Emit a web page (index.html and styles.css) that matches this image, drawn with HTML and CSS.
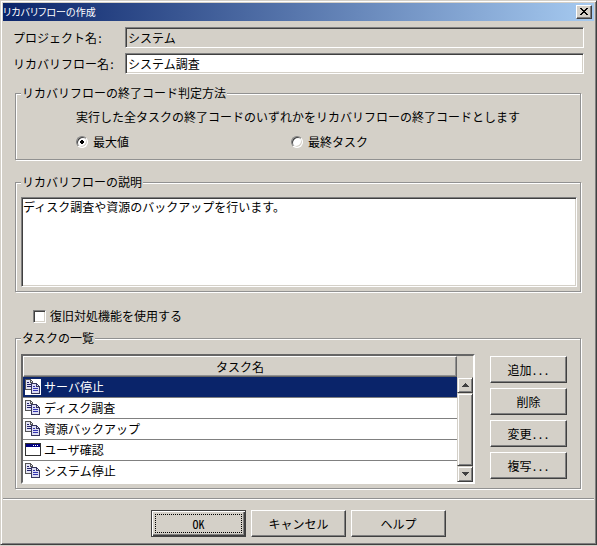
FILE: index.html
```html
<!DOCTYPE html>
<html lang="ja">
<head>
    <meta charset="UTF-8">
    <meta name="viewport" content="width=device-width, initial-scale=1.0">
    <title>リカバリフローの作成</title>
    <link rel="stylesheet" href="styles.css">
</head>
<body>
    <!-- icon definitions used in the task list -->
    <svg class="icon-defs" width="0" height="0" aria-hidden="true">
        <symbol id="icon-job" viewBox="0 0 16 16">
            <rect width="16" height="16" fill="#fff"/>
            <path d="M1 1h5v1h1v1h1v8H1z" fill="#e4e4f4"/>
            <path d="M0 0h6v1H1v9h5v1H0zM5 1h1v2h2v1H5zM6 1h1v1H6zM7 2h1v1H7z" fill="#555"/>
            <path d="M2 3h2v1H2zM2 5h4v1H2zM2 7h4v1H2z" fill="#22226a"/>
            <path d="M7 5h5v1h1v1h1v1h1v7H7z" fill="#dcdcf4"/>
            <path d="M6 4h6v1H7v9h7v1H6zM11 5h1v2h2v1h-3zM12 5h1v1h-1zM13 6h1v1h-1zM14 7h1v8h-1z" fill="#36365e"/>
            <path d="M8 7h2v1H8zM8 9h5v1H8zM8 11h5v1H8z" fill="#3434b0"/>
        </symbol>
        <symbol id="icon-window" viewBox="0 0 16 16">
            <rect x="0" y="1" width="16" height="13" fill="#303030"/>
            <rect x="1" y="2" width="14" height="11" fill="#fff"/>
            <rect x="1" y="2" width="14" height="3" fill="#000080"/>
            <path d="M8 3h1v1H8zM10 3h1v1h-1zM12 3h1v1h-1z" fill="#fff"/>
        </symbol>
    </svg>

    <form class="dialog">
        <div class="title-bar">
            <span class="title">リカバリフローの作成</span>
            <button type="button" class="close-btn" aria-label="閉じる">
                <svg width="8" height="7" viewBox="0 0 8 7"><path d="M0 0h2v1h1v1h2V1h1V0h2v1H7v1H6v1H5v1h1v1h1v1h1v1H6V6H5V5H3v1H2v1H0V6h1V5h1V4h1V3H2V2H1V1H0z"/></svg>
            </button>
        </div>

        <div class="content">
            <div class="fields">
                <label for="project">プロジェクト名<span class="half">:</span></label>
                <input type="text" id="project" class="text-box" value="システム" readonly>
                <label for="flow">リカバリフロー名<span class="half">:</span></label>
                <input type="text" id="flow" class="text-box" value="システム調査">
            </div>

            <fieldset class="group exit-code">
                <legend>リカバリフローの終了コード判定方法</legend>
                <p>実行した全タスクの終了コードのいずれかをリカバリフローの終了コードとします</p>
                <div class="radios">
                    <label class="check"><input type="radio" name="exit" checked>最大値</label>
                    <label class="check"><input type="radio" name="exit">最終タスク</label>
                </div>
            </fieldset>

            <fieldset class="group description">
                <legend>リカバリフローの説明</legend>
                <textarea aria-label="リカバリフローの説明">ディスク調査や資源のバックアップを行います。</textarea>
            </fieldset>

            <label class="check use-recovery"><input type="checkbox">復旧対処機能を使用する</label>

            <fieldset class="group tasks">
                <legend>タスクの一覧</legend>
                <div class="tasks-body">
                    <div class="task-list">
                        <table>
                            <thead>
                                <tr><th>タスク名</th></tr>
                            </thead>
                            <tbody>
                                <tr class="selected"><td><div class="task"><svg class="icon"><use href="#icon-job"/></svg>サーバ停止</div></td></tr>
                                <tr><td><div class="task"><svg class="icon"><use href="#icon-job"/></svg>ディスク調査</div></td></tr>
                                <tr><td><div class="task"><svg class="icon"><use href="#icon-job"/></svg>資源バックアップ</div></td></tr>
                                <tr><td><div class="task"><svg class="icon"><use href="#icon-window"/></svg>ユーザ確認</div></td></tr>
                                <tr><td><div class="task"><svg class="icon"><use href="#icon-job"/></svg>システム停止</div></td></tr>
                            </tbody>
                        </table>
                        <div class="scrollbar">
                            <button type="button" aria-label="上へ"><svg width="7" height="4" viewBox="0 0 7 4"><path d="M3 0h1v1h1v1h1v1h1v1H0V3h1V2h1V1h1z"/></svg></button>
                            <div class="thumb"></div>
                            <button type="button" aria-label="下へ"><svg width="7" height="4" viewBox="0 0 7 4"><path d="M0 0h7v1H6v1H5v1H4v1H3V3H2V2H1V1H0z"/></svg></button>
                        </div>
                    </div>
                    <div class="side-buttons">
                        <button type="button" class="btn">追加<span class="half">...</span></button>
                        <button type="button" class="btn">削除</button>
                        <button type="button" class="btn">変更<span class="half">...</span></button>
                        <button type="button" class="btn">複写<span class="half">...</span></button>
                    </div>
                </div>
            </fieldset>
        </div>

        <div class="footer">
            <button type="button" class="btn default"><span class="focus half">OK</span></button>
            <button type="button" class="btn">キャンセル</button>
            <button type="button" class="btn">ヘルプ</button>
        </div>
    </form>
</body>
</html>
```
FILE: styles.css
```css
* {
    box-sizing: border-box;
}

body {
    margin: 0;
    background-color: #d4d0c8;
    color: #000;
    font-family: "Noto Sans CJK JP", sans-serif;
    font-size: 12px;
    line-height: 16px;
}

button,
input,
textarea {
    margin: 0;
    font: inherit;
    color: inherit;
    border-radius: 0;
}

svg {
    display: block;
    shape-rendering: crispEdges;
}

.icon-defs {
    position: absolute;
}

/* half-width latin glyphs */
.half {
    font-feature-settings: "hwid";
}

.dialog {
    padding: 2px;
    border: 1px solid;
    border-color: #d4d0c8 #404040 #404040 #d4d0c8;
    box-shadow: inset 1px 1px 0 #fff, inset -1px -1px 0 #808080;
    background-color: #d4d0c8;
}

/* title bar */
.title-bar {
    display: flex;
    align-items: center;
    justify-content: space-between;
    height: 18px;
    padding-right: 2px;
    background: linear-gradient(to right, #0a246a, #a6caf0);
    color: #fff;
}

.title {
    font-size: 10px;
    font-feature-settings: "palt";
}

.close-btn {
    display: flex;
    align-items: center;
    justify-content: center;
    width: 16px;
    height: 14px;
    padding: 0 1px 1px 0;
    border: 1px solid;
    border-color: #fff #404040 #404040 #fff;
    box-shadow: inset -1px -1px 0 #808080;
    background-color: #d4d0c8;
}

.content {
    padding: 6px 10px 9px;
}

/* name fields */
.fields {
    display: grid;
    grid-template-columns: 112px 1fr;
    row-gap: 5px;
    align-items: center;
}

.text-box,
textarea {
    border: 1px solid;
    border-color: #808080 #fff #fff #808080;
    box-shadow: inset 1px 1px 0 #404040, inset -1px -1px 0 #d4d0c8;
    background-color: #fff;
    outline: none;
}

.text-box {
    width: 100%;
    height: 21px;
    padding: 1px 2px;
}

.text-box:read-only {
    background-color: #d4d0c8;
}

/* group boxes */
.group {
    min-width: 0;
    margin: 11px 3px 0 2px;
    padding: 8px 5px 4px;
    border: 1px solid #919191;
    box-shadow: 1px 1px 0 #fff, inset 1px 1px 0 #fff;
}

.group legend {
    margin-left: 0;
    padding: 0 1px;
    background-color: #d4d0c8;
}

.exit-code {
    padding-bottom: 9px;
}

.exit-code p {
    margin: 0 0 9px 55px;
}

.radios {
    display: grid;
    grid-template-columns: 215px 1fr;
    margin-left: 55px;
}

.check {
    display: flex;
    align-items: center;
    gap: 4px;
}

.radios .check {
    gap: 5px;
}

.check input {
    appearance: none;
    width: 13px;
    height: 13px;
    border: 1px solid;
    border-color: #808080 #fff #fff #808080;
    box-shadow: inset 1px 1px 0 #404040, inset -1px -1px 0 #d4d0c8;
    background-color: #fff;
}

.check input[type="radio"] {
    width: 12px;
    height: 12px;
    border-radius: 50%;
}

.check input[type="radio"]:checked {
    background-image: radial-gradient(circle, #000 2px, transparent 2px);
}

.description {
    margin-top: 14px;
    padding-top: 7px;
    padding-right: 3px;
}

textarea {
    display: block;
    width: 100%;
    height: 90px;
    padding: 1px;
    resize: none;
}

.use-recovery {
    width: fit-content;
    margin: 16px 0 0 20px;
}

/* task list */
.tasks {
    margin-top: 6px;
    padding-right: 13px;
}

.tasks-body {
    display: flex;
    gap: 15px;
}

.task-list {
    flex: 1;
    display: flex;
    border: 2px solid;
    border-color: #666 #fff #fff #666;
}

.task-list table {
    flex: 1;
    border-collapse: separate;
    border-spacing: 0;
    background-color: #fff;
}

.task-list th {
    height: 21px;
    padding: 0;
    border: 1px solid;
    border-color: #fff #666 #666 #fff;
    box-shadow: inset -1px -1px 0 #919191;
    background-color: #d4d0c8;
    font-weight: normal;
}

.task-list td {
    height: 21px;
    padding: 0 0 0 2px;
    border-bottom: 1px solid #808080;
}

.task-list tr:last-child td {
    border-bottom-color: #fff;
}

.task-list .selected td {
    background-color: #0a246a;
    color: #fff;
}

.task {
    display: flex;
    align-items: center;
    gap: 3px;
}

.icon {
    width: 16px;
    height: 16px;
}

.scrollbar {
    display: flex;
    flex-direction: column;
    width: 16px;
    margin-top: 21px;
}

.scrollbar button,
.thumb {
    border: 1px solid;
    border-color: #d4d0c8 #404040 #404040 #d4d0c8;
    box-shadow: inset 1px 1px 0 #fff, inset -1px -1px 0 #808080;
    background-color: #d4d0c8;
}

.scrollbar button {
    display: flex;
    align-items: center;
    justify-content: center;
    height: 16px;
    padding: 0;
    fill: #404040;
}

.thumb {
    flex: 1;
}

/* buttons */
.btn {
    height: 27px;
    padding: 0;
    border: 1px solid;
    border-color: #fff #404040 #404040 #fff;
    box-shadow: inset -1px -1px 0 #808080;
    background-color: #d4d0c8;
}

.side-buttons {
    display: flex;
    flex-direction: column;
    gap: 5px;
    width: 77px;
    padding-top: 2px;
}

.footer {
    display: flex;
    justify-content: center;
    gap: 5px;
    padding: 11px 0 5px;
    border-top: 1px solid #919191;
    box-shadow: inset 0 1px 0 #fff;
}

.footer .btn {
    width: 95px;
}

.footer .default {
    padding: 2px;
    border-color: #404040;
    box-shadow: inset 1px 1px 0 #fff, inset -1px -1px 0 #404040, inset -2px -2px 0 #808080;
}

.focus {
    display: flex;
    align-items: center;
    justify-content: center;
    height: 19px;
    margin: 0 1px;
    border: 1px dotted #000;
}
```
